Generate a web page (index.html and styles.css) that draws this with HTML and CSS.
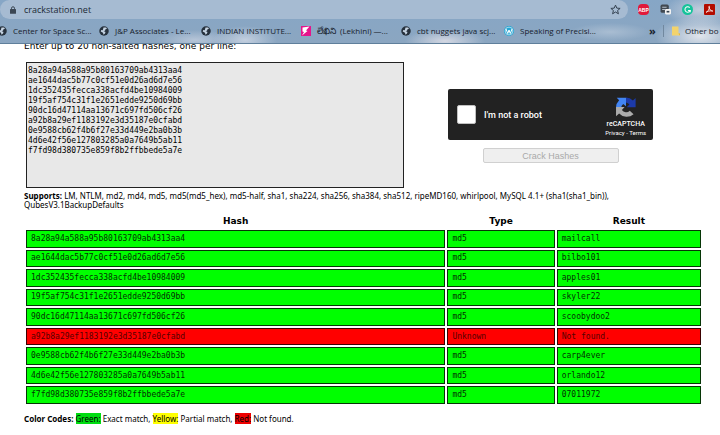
FILE: index.html
```html
<!DOCTYPE html>
<html lang="en">
<head>
<meta charset="utf-8">
<title>CrackStation</title>
<link rel="stylesheet" href="styles.css">
</head>
<body>
<svg width="0" height="0" class="defs" aria-hidden="true">
  <symbol id="globe" viewBox="0 0 20 20">
    <circle cx="10" cy="10" r="9.5" fill="#26313d"/>
    <path d="M9 3l5 0 2 2.500-3 1-1 3-3 .5 4 2-1 3-3 2.500-1-4-4.500-2.500 1-3 3 .5z" fill="#c5d3e2"/>
  </symbol>
</svg>
<header class="browser">
  <div class="toolbar">
    <label class="omnibox">
      <svg class="lock" viewBox="0 0 12 16"><path d="M3 7V4.500a3 3 0 0 1 6 0V7" fill="none" stroke="#3b4653" stroke-width="2"/><rect x="0" y="6" width="12" height="9.500" rx="1" fill="#3b4653"/></svg>
      <input class="url" type="text" value="crackstation.net" aria-label="Address">
      <button class="tool star" aria-label="Bookmark this page"><svg viewBox="0 0 20 20"><path d="M10 2l2.400 5.500 6 .5-4.600 3.900 1.500 5.900L10 14.600l-5.300 3.200 1.500-5.900L1.600 8l6-.5z" fill="none" stroke="#344150" stroke-width="1.800"/></svg></button>
    </label>
    <div class="extensions">
      <button class="tool abp" aria-label="Adblock Plus">ABP</button>
      <button class="tool" aria-label="Reader"><svg viewBox="0 0 20 20"><rect x="1" y="1" width="15" height="15" rx="3" fill="#414952"/><path d="M4 6h8M4 10h5" stroke="#b7c2cf" stroke-width="2"/><rect x="9" y="9" width="11" height="10" rx="2" fill="#f3f3f3"/><path d="M12 14h5" stroke="#33404d" stroke-width="3"/></svg></button>
      <button class="tool" aria-label="Grammarly"><svg viewBox="0 0 20 20"><circle cx="10" cy="10" r="10" fill="#15c39a"/><path d="M14 6.500a5 5 0 1 0 1 5.500h-4M15 12v3" fill="none" stroke="#fff" stroke-width="1.900"/></svg></button>
      <button class="tool" aria-label="Acrobat"><svg viewBox="0 0 20 20"><rect width="20" height="20" rx="2" fill="#b30b00"/><path d="M4 15c3-1 6-6 6-10 0-2-2-1-1 1 1 4 4 7 7 7 1-1-8-1-12 2z" fill="none" stroke="#fff" stroke-width="1.500"/></svg></button>
    </div>
  </div>
  <nav class="bookmarks" aria-label="Bookmarks">
    <div class="links">
      <a href="#"><svg viewBox="0 0 20 20"><use href="#globe"/></svg>Center for Space Sc...</a>
      <a href="#"><svg viewBox="0 0 20 20"><use href="#globe"/></svg>J&amp;P Associates - Le...</a>
      <a href="#"><svg viewBox="0 0 20 20"><use href="#globe"/></svg>INDIAN INSTITUTE...</a>
      <a href="#"><svg viewBox="0 0 20 20"><rect width="20" height="20" fill="#e5148b"/><path d="M3 3L17 1 10 9l3 1-11 9 4-7-3-1z" fill="#fff"/></svg><span><span class="telugu" lang="te">లేఖిని</span> (Lekhini) —...</span></a>
      <a href="#"><svg viewBox="0 0 20 20"><use href="#globe"/></svg>cbt nuggets java scj...</a>
      <a href="#"><svg viewBox="0 0 20 20"><circle cx="10" cy="10" r="10" fill="#25a5d3"/><circle cx="10" cy="10" r="7.800" fill="none" stroke="#fff" stroke-width="1.200"/><path d="M4 6l3.500 9L10 8l2.500 7L16 6" fill="none" stroke="#fff" stroke-width="2"/></svg>Speaking of Precisi...</a>
    </div>
    <div class="others">
      <button class="more" aria-label="More bookmarks">»</button>
      <a class="folder" href="#"><svg viewBox="0 0 20 20"><path d="M2 1h13v14h3v4H2z" fill="#f3d36c"/><path d="M15 15h3v4z" fill="#d8b03d"/></svg>Other bo</a>
    </div>
  </nav>
</header>
<main class="page">
  <form class="crack">
    <label class="prompt" for="hashes">Enter up to 20 non-salted hashes, one per line:</label>
    <textarea id="hashes" spellcheck="false">8a28a94a588a95b80163709ab4313aa4
ae1644dac5b77c0cf51e0d26ad6d7e56
1dc352435fecca338acfd4be10984009
19f5af754c31f1e2651edde9250d69bb
90dc16d47114aa13671c697fd506cf26
a92b8a29ef1183192e3d35187e0cfabd
0e9588cb62f4b6f27e33d449e2ba0b3b
4d6e42f56e127803285a0a7649b5ab11
f7fd98d380735e859f8b2ffbbede5a7e</textarea>
    <div class="verify">
      <div class="captcha">
        <label class="robot"><input type="checkbox">I'm not a robot</label>
        <div class="brand">
          <svg viewBox="0 0 64 64"><path d="M60 6v27H34l8-8A15 15 0 0 0 32 19V4a30 30 0 0 1 20 9z" fill="#1c3aa9"/><path d="M5 5h27v25l-8-7a15 15 0 0 0-6 10H3A30 30 0 0 1 12 12z" fill="#4285f4"/><path d="M3 59V32h25l-8 9a15 15 0 0 0 23 2l11 10A30 30 0 0 1 12 51z" fill="#ababab"/></svg>
          <span class="name">reCAPTCHA</span>
          <span class="terms"><a href="#">Privacy</a> - <a href="#">Terms</a></span>
        </div>
      </div>
      <button class="submit" type="submit" disabled>Crack Hashes</button>
    </div>
  </form>
  <p class="note supports"><b>Supports:</b> LM, NTLM, md2, md4, md5, md5(md5_hex), md5-half, sha1, sha224, sha256, sha384, sha512, ripeMD160, whirlpool, MySQL 4.1+ (sha1(sha1_bin)), QubesV3.1BackupDefaults</p>
  <table class="results">
    <colgroup><col class="c-hash"><col class="c-type"><col class="c-result"></colgroup>
    <thead><tr><th>Hash</th><th>Type</th><th>Result</th></tr></thead>
    <tbody>
      <tr><td>8a28a94a588a95b80163709ab4313aa4</td><td>md5</td><td>mailcall</td></tr>
      <tr><td>ae1644dac5b77c0cf51e0d26ad6d7e56</td><td>md5</td><td>bilbo101</td></tr>
      <tr><td>1dc352435fecca338acfd4be10984009</td><td>md5</td><td>apples01</td></tr>
      <tr><td>19f5af754c31f1e2651edde9250d69bb</td><td>md5</td><td>skyler22</td></tr>
      <tr><td>90dc16d47114aa13671c697fd506cf26</td><td>md5</td><td>scoobydoo2</td></tr>
      <tr class="missing"><td>a92b8a29ef1183192e3d35187e0cfabd</td><td>Unknown</td><td>Not found.</td></tr>
      <tr><td>0e9588cb62f4b6f27e33d449e2ba0b3b</td><td>md5</td><td>carp4ever</td></tr>
      <tr><td>4d6e42f56e127803285a0a7649b5ab11</td><td>md5</td><td>orlando12</td></tr>
      <tr><td>f7fd98d380735e859f8b2ffbbede5a7e</td><td>md5</td><td>07011972</td></tr>
    </tbody>
  </table>
  <p class="note legend"><b>Color Codes:</b> <span class="green">Green:</span> Exact match, <span class="yellow">Yellow:</span> Partial match, <span class="red">Red:</span> Not found.</p>
</main>
</body>
</html>
```
FILE: styles.css
```css
* { box-sizing: border-box; }
body { margin: 0; background: #fff; color: #000; font: 8px/9px "Noto Sans", sans-serif; }
.defs { position: absolute; }
a { color: inherit; text-decoration: none; }
button { font: inherit; color: inherit; border: 0; padding: 0; background: none; }

.browser {
  border-bottom: 1px solid #5f7f9b;
  background:
    radial-gradient(ellipse 32px 14px at 245px 40px, #c3cfdf, transparent),
    radial-gradient(ellipse 40px 12px at 445px 41px, #d3d7e2, transparent),
    radial-gradient(ellipse 45px 20px at 700px 36px, #e1e5ec, transparent),
    radial-gradient(ellipse 35px 16px at 700px 10px, #c2cddc, transparent),
    radial-gradient(ellipse 40px 10px at 195px 40px, #b6c5d8, transparent),
    radial-gradient(ellipse 40px 9px at 610px 32px, #a9bdd2, transparent),
    linear-gradient(#86a6c6, #8ba6c1);
  font: 8px/12px "Open Sans", "Noto Sans", sans-serif;
  color: #17212c;
}
.toolbar { display: flex; align-items: center; height: 19px; }
.omnibox { flex: 0 0 628px; display: flex; align-items: center; height: 19px; padding: 0 7px 0 10px; background: #a6bbd2; border-radius: 10px; }
.lock { width: 6px; height: 8px; margin-right: 8px; }
.url { flex: 1; min-width: 0; border: 0; padding: 0; background: none; color: #202a35; font: 9px/12px "Open Sans", sans-serif; }
.extensions { display: flex; gap: 11px; margin-left: 10px; }
.tool { flex: none; width: 11px; height: 11px; display: flex; }
.tool svg { width: 100%; height: 100%; }
.abp { align-items: center; justify-content: center; border-radius: 4px; background: #e1193a; color: #fff; font: bold 5px/6px "Liberation Sans", sans-serif; }
.bookmarks { display: flex; justify-content: space-between; height: 24px; white-space: nowrap; }
.bookmarks svg { flex: none; width: 10px; height: 10px; }
.links { display: grid; grid-template-columns: 102px 102px 100px 100px 103px 110px; margin-left: -3px; }
.links a, .folder { display: flex; align-items: center; gap: 6px; }
.telugu { display: inline-block; min-width: 21px; font-size: 9px; }
.others { display: flex; align-items: center; width: 71px; }
.more { width: 14px; text-align: left; font-size: 11px; font-weight: bold; }
.folder { gap: 4px; border-left: 1px solid #71889f; padding-left: 7px; height: 12px; }

.page { padding: 0 17px 12px 24px; overflow: hidden; }
.crack { display: grid; grid-template-columns: 56% 1fr; }
.prompt { grid-column: 1 / -1; margin: -4px 0 10px; font: 9px/12px "DejaVu Sans", sans-serif; }
textarea { display: block; margin-left: 2px; height: 126px; padding: 3px 1px; border: 1px solid #222; border-radius: 0; resize: none; background: #e8e8e8; color: #000; font: 8px/10px "DejaVu Sans Mono", monospace; }
.verify { display: flex; flex-direction: column; align-items: center; gap: 8px; padding: 27px 6px 0 0; }
.captcha { display: flex; align-items: center; justify-content: space-between; width: 205px; height: 51px; padding: 0 7px 0 9px; border-radius: 2px; background: #222; color: #fff; font-family: Roboto, sans-serif; }
.robot { display: flex; align-items: center; gap: 8px; font-size: 9px; line-height: 12px; font-weight: 500; }
.robot input { appearance: none; width: 19px; height: 19px; margin: 0; border: 1px solid #c1c1c1; border-radius: 2px; background: #fff; }
.brand { display: flex; flex-direction: column; align-items: center; padding-top: 4px; }
.brand svg { width: 22px; height: 22px; }
.name { font-size: 7px; line-height: 9px; margin-top: 2px; font-weight: 500; }
.terms { font-size: 6px; line-height: 8px; }
.submit { width: 136px; height: 15px; border: 1px solid #d0d0d0; border-radius: 2px; background: #efefef; color: #a9a9a9; font: 9px/12px "Liberation Sans", sans-serif; }

.note { margin: 3px 0 0; }
.supports { padding-right: 24px; }
.results { width: 100%; height: 193px; margin-top: 4px; table-layout: fixed; border-spacing: 2px; }
.c-hash { width: 62.5%; }
.c-type { width: 16%; }
.c-result { width: 21.5%; }
th { height: 13px; padding: 0; font: bold 9px/11px "DejaVu Sans", sans-serif; }
td { padding: 0 4px; border: 1px solid #063606; background: #0f0; color: #042f04; font: 8px/10px "DejaVu Sans Mono", monospace; }
.missing td { background: #f00; border-color: #3c0000; color: #500; }
.legend { margin-top: 8px; }
.green { background: #0d1; }
.yellow { background: #ff0; }
.red { background: #e00; }
```
